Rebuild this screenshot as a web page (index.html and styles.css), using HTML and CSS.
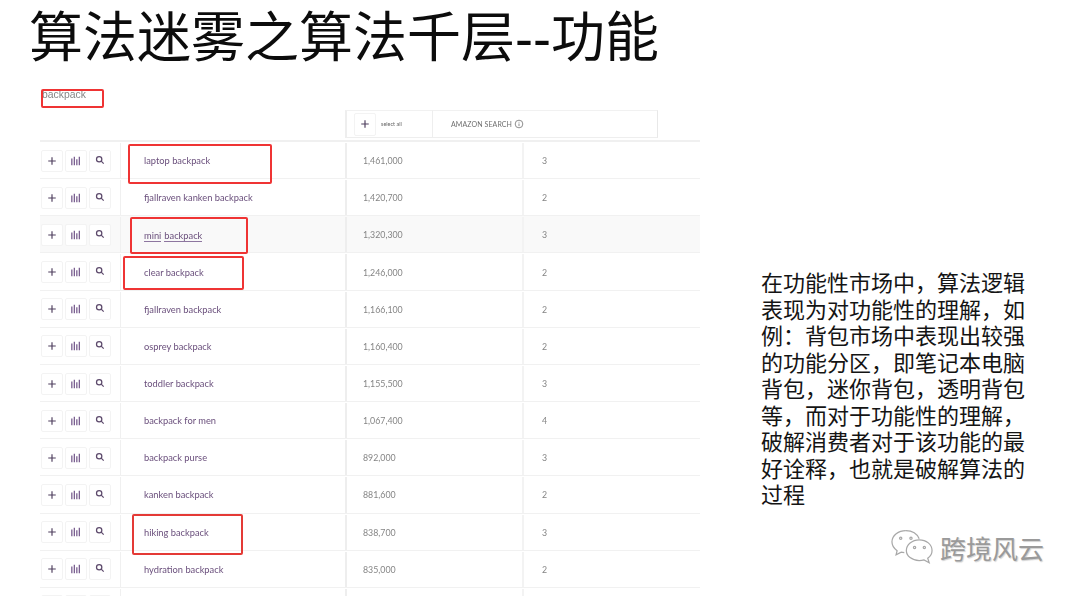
FILE: index.html
```html
<!DOCTYPE html>
<html lang="zh">
<head>
<meta charset="utf-8">
<title>算法迷雾之算法千层--功能</title>
<link rel="stylesheet" href="styles.css">
</head>
<body>
<div class="slide">
  <h1 class="title">算法迷雾之算法千层--功能</h1>
  <div class="content">
    <section class="table-wrap">
      <div class="search-term">backpack</div>
      <div class="head">
        <div class="head-cell head-select"><span class="btn btn-head"><svg class="ico" viewBox="0 0 12 12"><path d="M6 1.5v9M1.5 6h9"/></svg></span><span class="select-all">select all</span></div>
        <div class="head-cell head-amazon">AMAZON SEARCH <svg class="info" viewBox="0 0 12 12"><circle cx="6" cy="6" r="4.6"/><path d="M6 5.4v3.2M6 3.4v.9"/></svg></div>
      </div>
      <div class="rows" id="rows"></div>
      <div class="mark mark-term"></div>
      <div class="mark mark-laptop"></div>
      <div class="mark mark-mini"></div>
      <div class="mark mark-clear"></div>
      <div class="mark mark-hiking"></div>
    </section>
    <p class="note">在功能性市场中，算法逻辑表现为对功能性的理解，如例：背包市场中表现出较强的功能分区，即笔记本电脑背包，迷你背包，透明背包等，而对于功能性的理解，破解消费者对于该功能的最好诠释，也就是破解算法的过程</p>
  </div>
  <div class="watermark">
    <svg class="wechat" viewBox="0 0 42 36"><path d="M15 1.5C8 1.5 1.5 6 1.5 12.5c0 3.800 2 6.600 5 8.600l-1 4 5-2.600 3 .5"/><path d="M15 1.500c6 0 11 3 13 8"/><circle cx="10" cy="9" r="1.100"/><circle cx="20" cy="9" r="1.100"/><path d="M28 10.500c7 0 12.500 4.600 12.500 10.400 0 3.200-1.600 5.800-4.200 7.600l1.400 4.400-5-2.800c-1.400.4-3 .6-4.700.6-7 0-12.500-4.400-12.500-9.800S21 10.500 28 10.500z"/><circle cx="23.500" cy="18" r="1.100"/><circle cx="33" cy="18" r="1.100"/></svg>
    <span>跨境风云</span>
  </div>
</div>
<script src="rows.js"></script>
</body>
</html>
```
FILE: rows.js
```js
var data = [
  ["laptop backpack", "1,461,000", "3"],
  ["fjallraven kanken backpack", "1,420,700", "2"],
  ["mini backpack", "1,320,300", "3"],
  ["clear backpack", "1,246,000", "2"],
  ["fjallraven backpack", "1,166,100", "2"],
  ["osprey backpack", "1,160,400", "2"],
  ["toddler backpack", "1,155,500", "3"],
  ["backpack for men", "1,067,400", "4"],
  ["backpack purse", "892,000", "3"],
  ["kanken backpack", "881,600", "2"],
  ["hiking backpack", "838,700", "3"],
  ["hydration backpack", "835,000", "2"],
  ["", "", ""]
];
var plus = '<svg class="ico" viewBox="0 0 12 12"><path d="M6 1.5v9M1.500 6h9"/></svg>';
var bars = '<svg class="ico ico-bars" viewBox="0 0 12 12"><path d="M1 3v8M4 1v10M7 4v7M10 1v10"/></svg>';
var lens = '<svg class="ico ico-lens" viewBox="0 0 12 12"><circle cx="5" cy="5" r="3.200"/><path d="M7.400 7.400l3 3"/></svg>';
var html = "";
data.forEach(function (r, i) {
  var kw = r[0] === "mini backpack"
    ? '<a class="kw-link">mini</a> <a class="kw-link">backpack</a>'
    : r[0];
  html += '<div class="row' + (i === 2 ? ' row-alt' : '') + '">' +
    '<div class="cell-actions"><span class="btn">' + plus + '</span><span class="btn">' + bars + '</span><span class="btn">' + lens + '</span></div>' +
    '<div class="cell-kw">' + kw + '</div>' +
    '<div class="cell-vol">' + r[1] + '</div>' +
    '<div class="cell-num">' + r[2] + '</div>' +
    '</div>';
});
document.getElementById("rows").innerHTML = html;
```
FILE: styles.css
```css
* { box-sizing: border-box; }
html, body { margin: 0; padding: 0; background: #fff; }
.slide {
  position: relative;
  width: 1080px;
  height: 596px;
  overflow: hidden;
  display: flex;
  flex-direction: column;
  font-family: "Noto Sans CJK SC", "Noto Sans", sans-serif;
  color: #111;
}
.title {
  margin: 0;
  padding: 7px 0 0 29px;
  height: 88px;
  font-family: "Liberation Sans", "Noto Sans CJK SC", sans-serif;
  font-size: 54px;
  line-height: 62px;
  font-weight: 400;
  color: #0c0c0c;
  white-space: nowrap;
}
.content { display: flex; flex: 1; min-height: 0; }
.table-wrap {
  position: relative;
  width: 660px;
  margin-left: 40px;
  flex: none;
  font-family: Lato, "Liberation Sans", sans-serif;
  filter: blur(.45px);
}
.search-term {
  height: 22px;
  padding: 1px 0 0 2px;
  font-family: "Liberation Sans", sans-serif;
  font-size: 10.4px;
  line-height: 11px;
  color: #858585;
}
.head {
  display: flex;
  align-items: flex-start;
  height: 32px;
  padding-left: 305px;
  border-bottom: 2px solid #f0f0f0;
}
.head-cell {
  display: flex;
  align-items: center;
  height: 28px;
  background: #fff;
  border-top: 1px solid #f1f1f1;
  border-bottom: 1px solid #eee;
}
.head-select { width: 88px; padding-left: 7px; border-right: 1px solid #eee; border-left: 2px solid #eee; }
.head-amazon {
  width: 225px;
  padding-left: 18px;
  font-size: 7px;
  color: #6f6f6f;
  letter-spacing: .1px;
  border-right: 1px solid #e8e8e8;
  gap: 2px;
}
.select-all { margin-left: 5px; font-size: 5.500px; color: #666; }
.info { width: 10px; height: 10px; fill: none; stroke: #777; stroke-width: 1; }
.rows { display: grid; grid-auto-rows: 37.17px; }
.row {
  display: grid;
  grid-template-columns: 80px 225px 177px 178px;
  align-items: stretch;
  border-bottom: 1px solid #f1f1f1;
  font-size: 9.300px;
  padding-top: 1px;
}
.row-alt { background: #f9f9f9; }
.cell-actions {
  display: flex;
  align-items: center;
  gap: 2px;
  padding-left: 1px;
}
.btn {
  display: flex;
  align-items: center;
  justify-content: center;
  width: 22px;
  height: 22px;
  background: #fff;
  border: 1px solid #f3f3f3;
  border-radius: 2px;
  flex: none;
}
.btn-head { width: 22px; height: 23px; }
.ico { width: 10px; height: 10px; fill: none; stroke: #4f3f5e; stroke-width: 1.400; }
.ico-bars { width: 10px; height: 10px; stroke: #75598c; stroke-width: 1.500; }
.ico-lens { stroke: #5d4a6c; stroke-width: 1.500; transform: translateY(-1px); }
.cell-kw {
  display: flex;
  align-items: center;
  gap: 3px;
  padding-left: 23px;
  color: #6a4f7c;
  border-left: 1px solid #f0f0f0;
  white-space: pre;
}
.kw-link { border-bottom: 1px solid #8d76a0; line-height: 11px; margin-top: 2px; }
.cell-vol {
  display: flex;
  align-items: center;
  padding-left: 16px;
  font-size: 8.800px;
  color: #858585;
  border-left: 2px solid #eee;
}
.cell-num {
  display: flex;
  align-items: center;
  padding-left: 18px;
  font-size: 8.800px;
  color: #858585;
  border-left: 2px solid #f3f3f3;
}
.mark { position: absolute; border: 2px solid #ef3434; border-radius: 2px; }
.mark-term { left: 1px; top: 1px; width: 63px; height: 19px; }
.mark-laptop { left: 88px; top: 56px; width: 144px; height: 40px; }
.mark-mini { left: 90px; top: 129px; width: 118px; height: 37px; }
.mark-clear { left: 83px; top: 168px; width: 121px; height: 34px; }
.mark-hiking { left: 92px; top: 426px; width: 111px; height: 41px; border-color: #e43a36; }
.note {
  width: 268px;
  margin: 180px 0 0 61px;
  font-size: 22px;
  line-height: 26.550px;
  color: #141414;
  flex: none;
}
.watermark {
  position: absolute;
  left: 890px;
  top: 529px;
  display: flex;
  align-items: center;
  gap: 6px;
  font-size: 26px;
  line-height: 36px;
  color: #9a9a9a;
  text-shadow: 1px 1px 1px rgba(0,0,0,.18);
}
.wechat { width: 44px; height: 37px; fill: none; stroke: #a8a8a8; stroke-width: 1.200; }
```
